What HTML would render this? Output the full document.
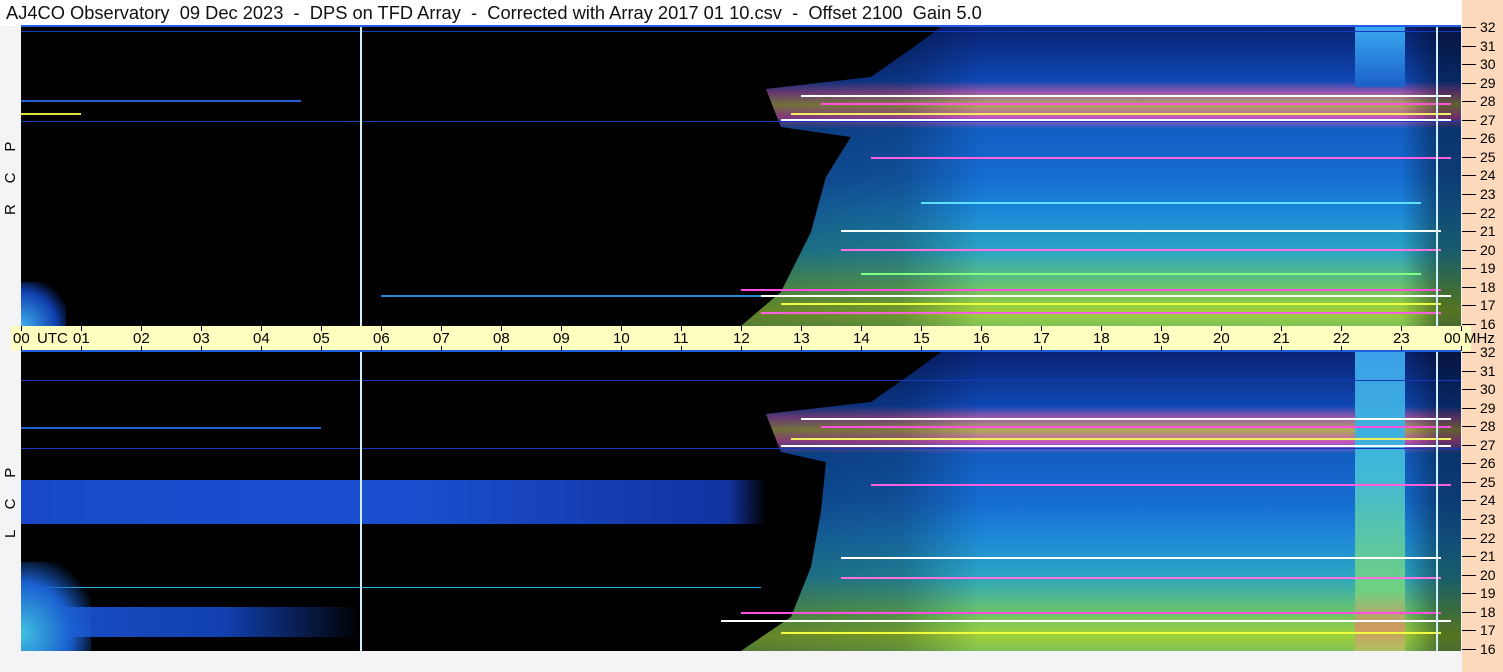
<!DOCTYPE html>
<html><head><meta charset="utf-8"><style>
body{margin:0;width:1503px;height:672px;background:#f4f4f6;position:relative;overflow:hidden;font-family:"Liberation Sans",sans-serif;}
.title{position:absolute;left:0;top:0;width:1503px;height:26px;background:#fff;font-size:18.3px;line-height:26px;color:#111;white-space:pre;padding-left:6px;box-sizing:border-box}
.peach{position:absolute;left:1462px;top:0;width:41px;height:672px;background:#fdd9bc}
.ybar{position:absolute;left:11px;top:326px;width:1460px;height:25px;background:#ffffc0}
.panel{position:absolute;left:21px;width:1440px;height:299px;background:#000;overflow:hidden;border-top:2px solid #1f5fe0}
.blob{position:absolute;left:0;top:0;width:1440px;height:299px}
.s{position:absolute;height:2px}
.lbl{position:absolute;font-size:15px;color:#000}
.tk{position:absolute;background:#000}
.vl{position:absolute;width:2px;background:#cfefff}
.side{position:absolute;left:1px;width:20px;height:120px;font-size:15px;writing-mode:vertical-rl;transform:rotate(180deg);text-align:center;line-height:20px;white-space:pre}
</style></head><body>
<div class="title">AJ4CO Observatory  09 Dec 2023  -  DPS on TFD Array  -  Corrected with Array 2017 01 10.csv  -  Offset 2100  Gain 5.0</div>
<div class="peach"></div>
<div class="ybar"></div>

<div class="panel" style="top:25px">
 <div class="blob" style="clip-path:polygon(920px 0,1440px 0,1440px 299px,720px 299px,760px 265px,790px 205px,805px 150px,830px 110px,760px 100px,745px 62px,850px 50px,890px 22px);background:
  linear-gradient(90deg,rgba(0,0,0,.8) 0,rgba(0,0,0,.35) 880px,rgba(0,0,0,.1) 960px,rgba(0,0,0,.1) 1380px,rgba(0,0,0,.5) 1420px),
  linear-gradient(180deg,#0a2680 0,#1050c8 18%,#b060c0 22%,#c0c060 26%,#e060d0 30%,#1468d8 34%,#1878e8 50%,#2098f0 62%,#30b8d8 75%,#70d880 86%,#b0e840 95%,#90d860 100%)"></div>
 <div style="position:absolute;left:1334px;top:0;width:50px;height:60px;background:linear-gradient(180deg,#3aa8f0,#1a60c8)"></div>
 <div class="s" style="left:0;top:94px;width:1440px;height:1px;background:#1838c0"></div>
 <div class="s" style="left:0;top:4px;width:1440px;height:1px;background:#1838c0"></div>
 <div class="s" style="left:0;top:73px;width:280px;background:#2060d0"></div>
 <div class="s" style="left:0;top:86px;width:60px;background:#e0e040"></div>
 <div class="s" style="left:780px;top:68px;width:650px;background:#fff"></div>
 <div class="s" style="left:800px;top:76px;width:630px;background:#ff50e0"></div>
 <div class="s" style="left:770px;top:86px;width:660px;background:#f0f060"></div>
 <div class="s" style="left:760px;top:92px;width:670px;background:#fff"></div>
 <div class="s" style="left:850px;top:130px;width:580px;background:#ff60e0"></div>
 <div class="s" style="left:900px;top:175px;width:500px;background:#60e0ff"></div>
 <div class="s" style="left:820px;top:203px;width:600px;background:#fff"></div>
 <div class="s" style="left:820px;top:222px;width:600px;background:#ff70e0"></div>
 <div class="s" style="left:840px;top:246px;width:560px;background:#80ff80"></div>
 <div class="s" style="left:720px;top:262px;width:700px;background:#ff50e0"></div>
 <div class="s" style="left:700px;top:268px;width:730px;background:#fff"></div>
 <div class="s" style="left:760px;top:276px;width:660px;background:#f0ff40"></div>
 <div class="s" style="left:740px;top:285px;width:680px;background:#ff60e0"></div>
 <div class="s" style="left:360px;top:268px;width:380px;background:#2a8ad0"></div>
 <div style="position:absolute;left:0;top:255px;width:45px;height:44px;background:radial-gradient(ellipse at 0 100%,#40b0f0,#1040b0 55%,transparent 80%)"></div>
 <div class="vl" style="left:339px;top:0;height:299px"></div>
 <div class="vl" style="left:1415px;top:0;height:299px"></div>
</div>

<div class="panel" style="top:350px">
 <div style="position:absolute;left:0;top:128px;width:745px;height:44px;background:linear-gradient(90deg,#1848c8,#1a50d0 50%,#1232a0 95%,transparent)"></div>
 <div class="blob" style="clip-path:polygon(920px 0,1440px 0,1440px 299px,720px 299px,770px 265px,790px 215px,800px 160px,805px 110px,760px 100px,745px 62px,850px 50px,890px 22px);background:
  linear-gradient(90deg,rgba(0,0,0,.8) 0,rgba(0,0,0,.35) 880px,rgba(0,0,0,.1) 960px,rgba(0,0,0,.1) 1380px,rgba(0,0,0,.5) 1420px),
  linear-gradient(180deg,#0a2680 0,#1050c8 18%,#b060c0 22%,#c0c060 26%,#e060d0 30%,#1468d8 34%,#1878e8 50%,#2098f0 62%,#30b8d8 75%,#70d880 86%,#b0e840 95%,#90d860 100%)"></div>
 <div style="position:absolute;left:1334px;top:0;width:50px;height:299px;background:linear-gradient(180deg,#3aa0e8,#40b8d8 40%,#70d080 80%,#d09860 92%,#b0c060)"></div>
 <div class="s" style="left:0;top:96px;width:1440px;height:1px;background:#1838c0"></div>
 <div class="s" style="left:0;top:28px;width:1440px;height:1px;background:#1838c0"></div>
 <div class="s" style="left:0;top:75px;width:300px;background:#2060d0"></div>
 <div class="s" style="left:780px;top:66px;width:650px;background:#fff"></div>
 <div class="s" style="left:800px;top:74px;width:630px;background:#ff50e0"></div>
 <div class="s" style="left:770px;top:86px;width:660px;background:#f0f060"></div>
 <div class="s" style="left:760px;top:93px;width:670px;background:#fff"></div>
 <div class="s" style="left:850px;top:132px;width:580px;background:#ff60e0"></div>
 <div class="s" style="left:820px;top:205px;width:600px;background:#fff"></div>
 <div class="s" style="left:820px;top:225px;width:600px;background:#ff70e0"></div>
 <div class="s" style="left:0;top:235px;width:740px;height:1px;background:#30b0e0"></div>
 <div class="s" style="left:720px;top:260px;width:700px;background:#ff50e0"></div>
 <div class="s" style="left:700px;top:268px;width:730px;background:#fff"></div>
 <div class="s" style="left:760px;top:280px;width:660px;background:#f0ff40"></div>
 <div style="position:absolute;left:0;top:255px;width:340px;height:30px;background:linear-gradient(90deg,#1a50c8,#1240b0 60%,transparent)"></div>
 <div style="position:absolute;left:0;top:210px;width:70px;height:89px;background:radial-gradient(ellipse at 0 80%,#40c0e0,#1a60d0 50%,transparent 80%)"></div>
 <div class="vl" style="left:339px;top:0;height:299px"></div>
 <div class="vl" style="left:1415px;top:0;height:299px"></div>
</div>

<div class="side" style="top:118px">R     C     P</div>
<div class="side" style="top:443px">L     C     P</div>

<div id="axis"></div>
<script>
var h='';
for(var i=0;i<=24;i++){var x=21+60*i;
 h+='<div class="tk" style="left:'+x+'px;top:326px;width:1px;height:5px"></div><div class="tk" style="left:'+x+'px;top:346px;width:1px;height:5px"></div>';
 var t=(i%24<10?'0':'')+(i%24);
 var lx=x-8; if(i==0)lx=13; if(i==24)lx=1444;
 h+='<div class="lbl" style="left:'+lx+'px;top:330px">'+t+'</div>';}
h+='<div class="lbl" style="left:37px;top:330px">UTC</div><div class="lbl" style="left:1464px;top:330px">MHz</div>';
for(var p=0;p<2;p++){var y0=p?352:27;
 for(var f=32;f>=16;f--){var y=y0+(32-f)*18.56;
  h+='<div class="tk" style="left:1462px;top:'+Math.round(y)+'px;width:14px;height:1px"></div>';
  h+='<div class="lbl" style="left:1480px;top:'+Math.round(y-8)+'px;font-size:14px">'+f+'</div>';}}
document.getElementById('axis').innerHTML=h;
</script>
</body></html>
